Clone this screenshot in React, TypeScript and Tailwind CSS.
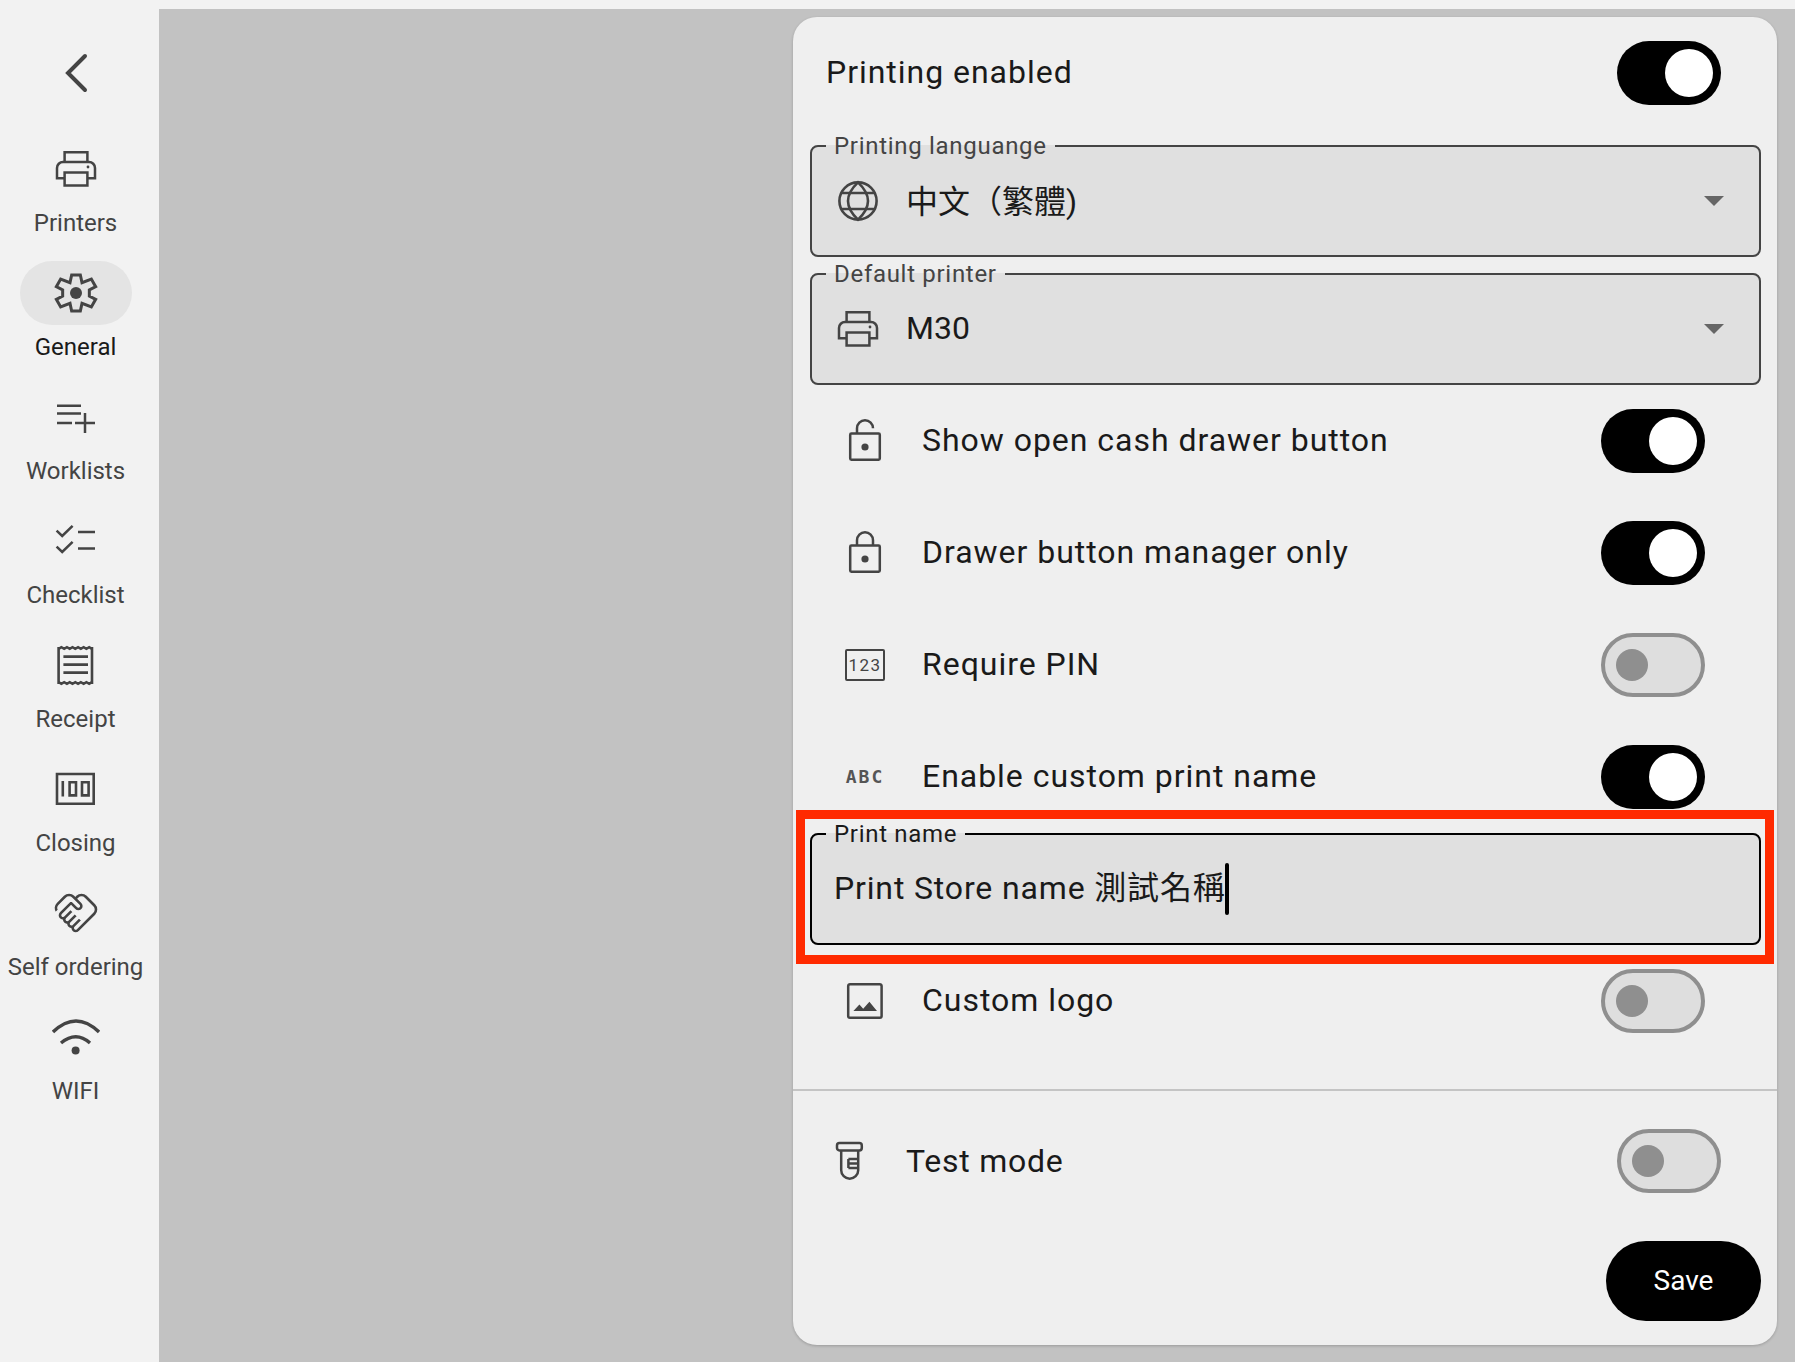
import type { ReactNode } from 'react';

const cjk = { fontFamily: 'Roboto, "Noto Sans CJK TC", sans-serif' };

function Icon({ children, className = 'h-12 w-12' }: { children: ReactNode; className?: string }) {
  return (
    <svg viewBox="0 0 24 24" className={`${className} shrink-0 text-[#444444]`} fill="currentColor">
      {children}
    </svg>
  );
}

const PrintIcon = () => (
  <Icon>
    <g fill="none" stroke="currentColor" strokeWidth="1.25">
      <path d="M6.300 8.500V3.600h11.400v4.900" />
      <path d="M6.300 16.600H2.500v-5.100a3 3 0 0 1 3-3h13a3 3 0 0 1 3 3v5.100h-3.800" />
      <path d="M6.300 13.800h11.400v6.500H6.300z" />
    </g>
    <circle cx="18" cy="11" r="0.7" />
  </Icon>
);

const GearIcon = () => (
  <Icon>
    <path d="M9.830 3h4.340l.83 3.830 4.670-1.830 2.160 3.830-3.160 1.670v3l3.160 1.670-2.160 3.830-4.670-1.830-.83 3.830H9.830L9 17.170 4.330 19l-2.160-3.830 3.160-1.670v-3L2.170 8.830 4.330 5 9 6.830z" fill="none" stroke="currentColor" strokeWidth="1.500" />
    <circle cx="12" cy="12" r="3" />
  </Icon>
);

const PlaylistIcon = () => (
  <Icon>
    <path d="M2.500 6.400h12M2.500 10.200h12M2.500 15h7.500M11.500 15h10M16.500 10v10" fill="none" stroke="currentColor" strokeWidth="1.250" />
  </Icon>
);

const ChecklistIcon = () => (
  <Icon>
    <path d="M2.300 6.800l2.800 2.700 5.200-5.100M2.300 14.800l2.800 2.700 5.200-5.100M13 7.500h8.500M13 15.800h8.500" fill="none" stroke="currentColor" strokeWidth="1.250" />
  </Icon>
);

const ReceiptIcon = () => (
  <Icon>
    <g fill="none" stroke="currentColor" strokeWidth="1.300">
      <path d="M3.300 3v18.500M20 3v18.500" />
      <path d="M3.300 3.900l1.390-.8 1.390.8 1.390-.8 1.390.8 1.390-.8 1.390.8 1.390-.8 1.390.8 1.390-.8 1.390.8 1.390-.8 1.390.8" />
      <path d="M3.300 20.600l1.390.8 1.390-.8 1.390.8 1.390-.8 1.390.8 1.390-.8 1.390.8 1.390-.8 1.390.8 1.390-.8 1.390.8 1.390-.8" />
      <path d="M5.700 7.800H18M5.700 11.800H18M5.700 15.800H18" />
    </g>
  </Icon>
);

const ClosingIcon = () => (
  <Icon>
    <path d="M2.500 4.500h18.350v14.850H2.500zM5.400 8v7.800M8.800 8.600H12v6.600H8.800zM15 8.600h3.300v6.600H15z" fill="none" stroke="currentColor" strokeWidth="1.300" />
  </Icon>
);

const HandshakeIcon = () => (
  <Icon>
    <path
      d="M12.220 19.850c-.18.18-.5.21-.71 0-.18-.18-.21-.5 0-.71l3.390-3.390-1.410-1.410-3.390 3.390c-.19.2-.51.19-.71 0-.21-.21-.18-.53 0-.71l3.390-3.390-1.410-1.410-3.390 3.390c-.18.18-.5.21-.71 0-.19-.19-.19-.51 0-.71l3.390-3.390-1.420-1.410-3.390 3.390c-.18.18-.5.21-.71 0-.19-.2-.19-.51 0-.71L9.520 8.400l1.870 1.860c.95.95 2.590.94 3.540 0 .98-.98.98-2.560 0-3.540l-1.860-1.860.28-.28c.78-.78 2.050-.78 2.830 0l4.240 4.240c.78.78.78 2.050 0 2.830l-8.200 8.200zm9.610-6.780c1.560-1.560 1.560-4.090 0-5.660l-4.240-4.240c-1.560-1.560-4.090-1.560-5.660 0l-.28.28-.28-.28c-1.560-1.560-4.090-1.560-5.660 0L2.170 6.710c-1.420 1.420-1.550 3.630-.4 5.190l1.450-1.450c-.39-.75-.26-1.700.37-2.330l3.540-3.540c.78-.78 2.050-.78 2.830 0l3.560 3.560c.18.18.21.5 0 .71-.21.21-.53.18-.71 0L9.520 5.570l-5.800 5.790c-.98.97-.98 2.560 0 3.540.39.39.89.63 1.420.7.07.52.3 1.020.7 1.420.4.4.9.63 1.420.7.07.52.3 1.020.7 1.420.4.4.9.63 1.420.7.07.54.31 1.030.7 1.420.47.47 1.100.73 1.770.73.67 0 1.300-.26 1.770-.73l8.210-8.190z"
      stroke="#f2f2f2"
      strokeWidth="0.7"
    />
  </Icon>
);

const WifiIcon = () => (
  <Icon>
    <path d="M0.500 9.500Q12-1.500 23.500 9.500M4.500 15Q12 8.800 19 15" fill="none" stroke="currentColor" strokeWidth="1.700" />
    <circle cx="11.800" cy="18.700" r="2" />
  </Icon>
);

const GlobeIcon = () => (
  <Icon>
    <g fill="none" stroke="currentColor" strokeWidth="1.300">
      <circle cx="12" cy="12" r="9.300" />
      <path d="M3.400 8h17.200M3.400 16h17.200" />
      <path d="M12 2.700C8.500 6 7 9 7 12s1.500 6 5 9.300c3.500-3.300 5-6.300 5-9.300s-1.500-6-5-9.300z" />
    </g>
  </Icon>
);

const LockOpenIcon = () => (
  <Icon>
    <path d="M5.200 8.300h13.600a.6.6 0 0 1 .6.6v11.900a.6.6 0 0 1-.6.6H5.200a.6.6 0 0 1-.6-.6V8.900a.6.6 0 0 1 .6-.6zM8 8.300V5.600a4 4 0 0 1 8 0" fill="none" stroke="currentColor" strokeWidth="1.250" />
    <circle cx="12" cy="15" r="1.800" />
  </Icon>
);

const LockIcon = () => (
  <Icon>
    <path d="M5.200 8.300h13.600a.6.6 0 0 1 .6.6v11.900a.6.6 0 0 1-.6.6H5.200a.6.6 0 0 1-.6-.6V8.900a.6.6 0 0 1 .6-.6zM8 8.300V5.600a4 4 0 0 1 8 0v2.700" fill="none" stroke="currentColor" strokeWidth="1.250" />
    <circle cx="12" cy="15" r="1.800" />
  </Icon>
);

const PinIcon = () => (
  <div className="flex h-[32px] w-[40px] shrink-0 items-center justify-center rounded-[2px] border-[2.5px] border-[#444444] text-[17px] leading-none tracking-[1.5px] text-[#444444]">
    123
  </div>
);

const AbcIcon = () => (
  <div className="flex w-[40px] shrink-0 justify-center font-['DejaVu_Sans_Mono',monospace] text-[18px] leading-none font-bold tracking-[2px] text-[#555555]">
    ABC
  </div>
);

const ImageIcon = () => (
  <Icon>
    <path d="M4.500 3.600h14.900a.9.9 0 0 1 .9.9v15a.9.9 0 0 1-.9.9H4.500a.9.9 0 0 1-.9-.9v-15a.9.9 0 0 1 .9-.9z" fill="none" stroke="currentColor" strokeWidth="1.250" />
    <path d="M6.200 17l3-3.300 1.900 2.200 3.100-3.500 3.800 4.600z" />
  </Icon>
);

const TubeIcon = () => (
  <Icon>
    <path d="M7.200 3h10a1.200 1.200 0 0 1 1.200 1.200v1.300a1.200 1.200 0 0 1-1.200 1.200h-10A1.200 1.200 0 0 1 6 5.500V4.200A1.200 1.200 0 0 1 7.200 3zM8.100 6.700v9.900a4.250 4.250 0 0 0 8.500 0V6.700M11.700 11h4.900M11.700 13.200h4.900M11.700 15.500h4.900M11.700 11v4.500" fill="none" stroke="currentColor" strokeWidth="1.250" />
  </Icon>
);

function Toggle({ on }: { on: boolean }) {
  if (on) {
    return (
      <div className="flex h-16 w-[104px] shrink-0 items-center justify-end rounded-full bg-black pr-2">
        <div className="h-12 w-12 rounded-full bg-white" />
      </div>
    );
  }
  return (
    <div className="flex h-16 w-[104px] shrink-0 items-center rounded-full border-4 border-[#8f8f8f] bg-[#dedede] pl-[11px]">
      <div className="h-8 w-8 rounded-full bg-[#8f8f8f]" />
    </div>
  );
}

const navItems = [
  { label: 'Printers', icon: <PrintIcon /> },
  { label: 'General', icon: <GearIcon />, active: true },
  { label: 'Worklists', icon: <PlaylistIcon /> },
  { label: 'Checklist', icon: <ChecklistIcon /> },
  { label: 'Receipt', icon: <ReceiptIcon /> },
  { label: 'Closing', icon: <ClosingIcon /> },
  { label: 'Self ordering', icon: <HandshakeIcon /> },
  { label: 'WIFI', icon: <WifiIcon /> },
];

function Sidebar() {
  return (
    <aside className="flex w-[159px] shrink-0 flex-col items-center bg-[#f2f2f2] pt-[53px] pr-[8px]">
      <svg viewBox="0 0 24 40" className="h-10 w-6 text-[#444444]" fill="none" stroke="currentColor" strokeWidth="4" strokeLinecap="round">
        <path d="M21 3L4 20l17 17" />
      </svg>
      <nav className="mt-[44px] flex w-full flex-col items-center">
        {navItems.map((item) => (
          <div key={item.label} className="flex h-[124px] w-full flex-col items-center">
            <div className={`flex h-16 w-28 items-center justify-center rounded-full ${item.active ? 'bg-[#e4e4e4]' : ''}`}>
              {item.icon}
            </div>
            <span className={`mt-[6px] text-[24px] leading-8 whitespace-nowrap ${item.active ? 'text-[#1a1a1a]' : 'text-[#444444]'}`}>
              {item.label}
            </span>
          </div>
        ))}
      </nav>
    </aside>
  );
}

function Outlined({ label, dark, className = '', children }: { label: string; dark?: boolean; className?: string; children: ReactNode }) {
  return (
    <fieldset className={`h-[122px] rounded-lg border-2 border-solid bg-[#e0e0e0] ${dark ? 'border-black' : 'border-[#444444]'} ${className}`}>
      <legend className={`mx-[14px] px-2 text-[24px] leading-[22px] tracking-[0.7px] ${dark ? 'text-[#1a1a1a]' : 'text-[#444444]'}`}>{label}</legend>
      {children}
    </fieldset>
  );
}

function SelectField({ label, icon, value, valueClass = '' }: { label: string; icon: ReactNode; value: string; valueClass?: string }) {
  return (
    <Outlined label={label}>
      <div className="flex h-[88px] items-center pr-[35px] pl-[22px]">
        <div className="flex w-[72px] shrink-0">{icon}</div>
        <span className={`flex-1 text-[32px] leading-10 text-[#1a1a1a] ${valueClass}`}>{value}</span>
        <div className="h-0 w-0 border-x-[10px] border-t-[10px] border-x-transparent border-t-[#666666]" />
      </div>
    </Outlined>
  );
}

function SettingRow({ icon, label, on }: { icon: ReactNode; label: string; on: boolean }) {
  return (
    <div className="flex h-[112px] items-center pr-[72px] pl-[48px]">
      <div className="flex w-[81px] shrink-0 justify-start">
        <div className="flex w-12 justify-center">{icon}</div>
      </div>
      <span className="flex-1 pb-[2px] text-[32px] leading-10 tracking-[0.97px] text-[#1a1a1a]">{label}</span>
      <Toggle on={on} />
    </div>
  );
}

function Panel() {
  return (
    <section className="relative ml-auto flex h-[1328px] w-[984px] flex-col rounded-[24px] bg-[#efefef] shadow-[0_1px_3px_rgba(0,0,0,0.2)]">
      <div className="mt-6 flex h-16 items-center justify-between pr-[56px] pl-[33px]">
        <span className="pb-[2px] text-[32px] leading-10 tracking-[0.97px] text-[#1a1a1a]">Printing enabled</span>
        <Toggle on />
      </div>

      <div className="mt-[30px] flex flex-col gap-[6px] pr-4 pl-[17px]">
        <SelectField label="Printing languange" icon={<GlobeIcon />} value="中文（繁體)" valueClass="pt-[2px]" />
        <SelectField label="Default printer" icon={<PrintIcon />} value="M30" valueClass="pb-[2px]" />
      </div>

      <div>
        <SettingRow icon={<LockOpenIcon />} label="Show open cash drawer button" on />
        <SettingRow icon={<LockIcon />} label="Drawer button manager only" on />
        <SettingRow icon={<PinIcon />} label="Require PIN" on={false} />
        <SettingRow icon={<AbcIcon />} label="Enable custom print name" on />
      </div>

      <div className="pr-4 pl-[17px]">
        <Outlined label="Print name" dark className="-mt-[10px]">
          <div className="flex h-[88px] items-center pl-[22px]">
            <span className="pb-[2px] text-[32px] leading-10 tracking-[0.85px] text-[#1a1a1a]">Print Store name 測試名稱</span>
            <div className="-ml-[1px] h-[52px] w-[4px] rounded-full bg-black" />
          </div>
        </Outlined>
      </div>

      <SettingRow icon={<ImageIcon />} label="Custom logo" on={false} />

      <div className="mt-[32px] h-[2px] bg-[#c4c4c4]" />

      <div className="mt-[38px] flex h-[64px] items-center pr-[56px] pl-[32px]">
        <div className="w-[81px] shrink-0"><TubeIcon /></div>
        <span className="flex-1 text-[32px] leading-10 tracking-[0.75px] text-[#1a1a1a]">Test mode</span>
        <Toggle on={false} />
      </div>

      <div className="mt-auto flex justify-end pr-4 pb-6">
        <button className="flex h-20 w-[155px] items-center justify-center rounded-full bg-black text-[28px] text-white">Save</button>
      </div>

      {/* annotation box drawn over the screenshot */}
      <div className="absolute top-[793px] left-[3px] h-[154px] w-[978px] border-[9px] border-[#ff2a00]" />
    </section>
  );
}

export default function App() {
  return (
    <div className="flex h-[1362px] w-[1795px] overflow-hidden bg-[#f2f2f2]" style={cjk}>
      <Sidebar />
      <main className="mt-[9px] flex h-[1353px] flex-1 bg-[#c2c2c2] pt-2 pr-[18px]">
        <Panel />
      </main>
    </div>
  );
}
